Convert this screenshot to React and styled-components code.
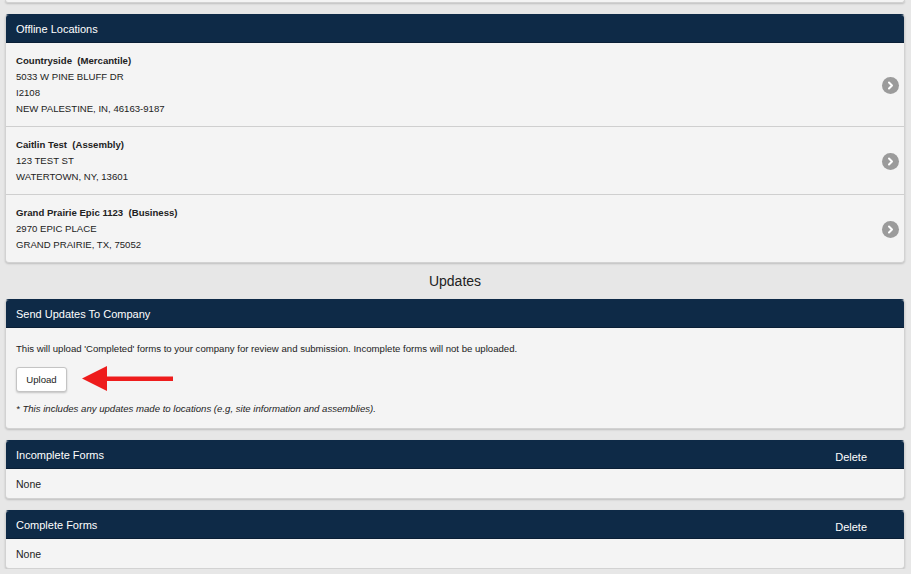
import React from "react";
import styled, { createGlobalStyle } from "styled-components";

const Global = createGlobalStyle`
  html, body { margin: 0; padding: 0; background: #e7e7e7; }
  body { font-family: "Liberation Sans", Arial, Helvetica, sans-serif; color: #222; }
`;

const Page = styled.div`
  display: flex;
  flex-direction: column;
  gap: 11px;
  padding: 0 6px 0 5px;
`;

const Card = styled.section`
  background: #f4f4f4;
  border: 1px solid #d2d2d2;
  border-top: ${(p) => (p.$cut ? "none" : "1px solid #0e2a47")};
  border-radius: ${(p) => (p.$cut ? "0 0 4px 4px" : "4px")};
  box-shadow: 0 1px 2px rgba(0, 0, 0, 0.18);
  overflow: hidden;
`;

const CutBody = styled.div`
  height: 2px;
`;

const Header = styled.header`
  height: 27px;
  background: #0e2a47;
  color: #fff;
  font-size: 11px;
  display: flex;
  align-items: center;
  justify-content: space-between;
  padding: 0 37px 0 10px;
  border-bottom: 1px solid #0a1f36;
`;

const HeaderAction = styled.span`
  padding-top: 4px;
  font-size: 11px;
`;

const Row = styled.div`
  display: flex;
  align-items: center;
  justify-content: space-between;
  padding: 10px 5px 9px 10px;
  font-size: 9.6px;
  line-height: 16px;
  & + & { border-top: 1px solid #cfcfcf; }
`;

const Name = styled.div`
  font-weight: 700;
  white-space: pre;
`;

const Chevron = styled.span`
  width: 17px;
  height: 17px;
  border-radius: 50%;
  background: #9b9b9b;
  display: flex;
  align-items: center;
  justify-content: center;
`;

const SectionTitle = styled.h2`
  margin: 0;
  text-align: center;
  font-size: 14px;
  line-height: 14px;
  font-weight: 400;
  color: #222;
`;

const Body = styled.div`
  padding: 13px 10px 11px 10px;
  font-size: 9.6px;
  line-height: 16px;
`;

const Para = styled.p`
  margin: 0;
`;

const Note = styled.p`
  margin: 9px 0 0;
  font-style: italic;
`;

const ActionRow = styled.div`
  display: flex;
  align-items: center;
  gap: 15px;
  margin-top: 9px;
`;

const Button = styled.button`
  font-family: inherit;
  font-size: 9.6px;
  color: #222;
  background: #fff;
  border: 1px solid #c4c4c4;
  border-radius: 3px;
  box-shadow: 0 1px 2px rgba(0, 0, 0, 0.2);
  width: 51px;
  height: 25px;
  padding: 0;
`;

const Empty = styled.div`
  height: 29px;
  display: flex;
  align-items: center;
  padding: 0 10px;
  font-size: 10.5px;
`;

const locations = [
  { name: "Countryside  (Mercantile)", lines: ["5033 W PINE BLUFF DR", "I2108", "NEW PALESTINE, IN, 46163-9187"] },
  { name: "Caitlin Test  (Assembly)", lines: ["123 TEST ST", "WATERTOWN, NY, 13601"] },
  { name: "Grand Prairie Epic 1123  (Business)", lines: ["2970 EPIC PLACE", "GRAND PRAIRIE, TX, 75052"] },
];

const ChevronIcon = () => (
  <Chevron>
    <svg width="9" height="9" viewBox="0 0 9 9">
      <path d="M3 1.5 L6 4.5 L3 7.5" fill="none" stroke="#fff" strokeWidth="2" strokeLinecap="round" strokeLinejoin="round" />
    </svg>
  </Chevron>
);

const RedArrow = () => (
  <svg width="92" height="26" viewBox="0 0 92 26">
    <polygon points="0,12.5 25,0 25,25" fill="#ee1c1c" />
    <rect x="24" y="10.5" width="67" height="4.5" fill="#ee1c1c" />
  </svg>
);

export default function App() {
  return (
    <>
      <Global />
      <Page>
        <Card $cut>
          <CutBody />
        </Card>

        <Card>
          <Header>Offline Locations</Header>
          {locations.map((loc) => (
            <Row key={loc.name}>
              <div>
                <Name>{loc.name}</Name>
                {loc.lines.map((l) => (
                  <div key={l}>{l}</div>
                ))}
              </div>
              <ChevronIcon />
            </Row>
          ))}
        </Card>

        <SectionTitle>Updates</SectionTitle>

        <Card>
          <Header>Send Updates To Company</Header>
          <Body>
            <Para>
              This will upload 'Completed' forms to your company for review and submission. Incomplete forms will not be uploaded.
            </Para>
            <ActionRow>
              <Button>Upload</Button>
              <RedArrow />
            </ActionRow>
            <Note>* This includes any updates made to locations (e.g, site information and assemblies).</Note>
          </Body>
        </Card>

        <Card>
          <Header>
            <span>Incomplete Forms</span>
            <HeaderAction>Delete</HeaderAction>
          </Header>
          <Empty>None</Empty>
        </Card>

        <Card>
          <Header>
            <span>Complete Forms</span>
            <HeaderAction>Delete</HeaderAction>
          </Header>
          <Empty>None</Empty>
        </Card>
      </Page>
    </>
  );
}
